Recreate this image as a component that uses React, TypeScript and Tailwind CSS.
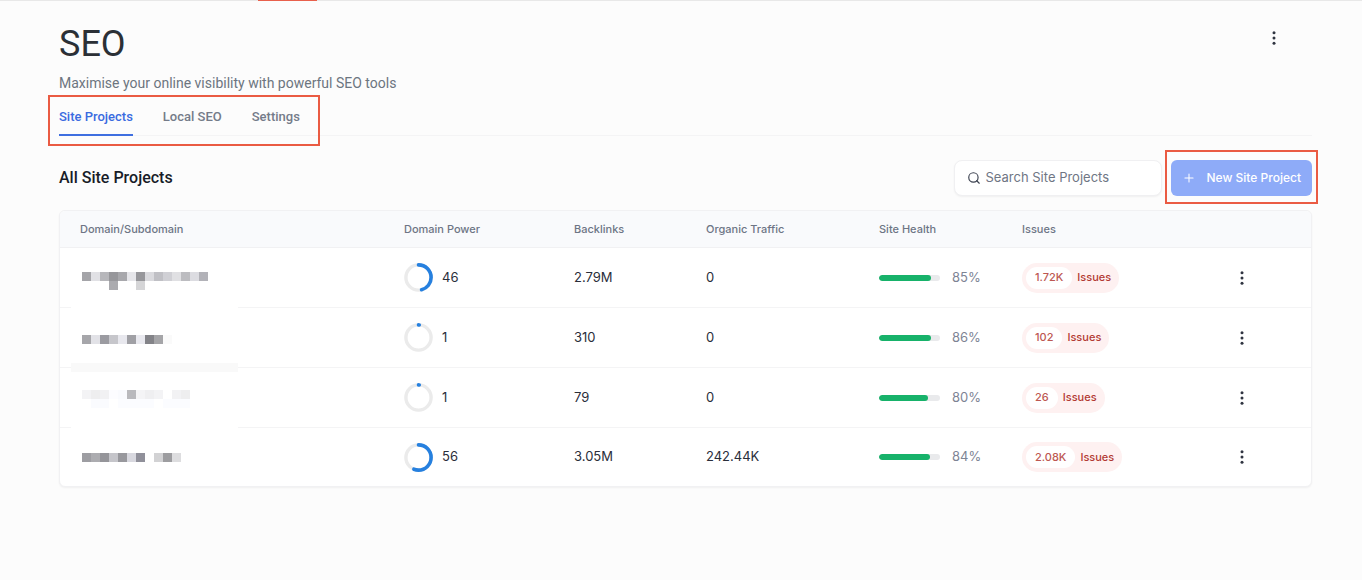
import { useState } from 'react';
import { Plus, Search } from 'lucide-react';

interface Block {
  x: number;
  y: number;
  color: string;
}

interface Project {
  id: string;
  power: number;
  backlinks: string;
  traffic: string;
  health: number;
  issues: string;
  seam?: 'top' | 'bottom';
  blocks: Block[];
}

const TABS = ['Site Projects', 'Local SEO', 'Settings'];

const COLUMNS = ['Domain/Subdomain', 'Domain Power', 'Backlinks', 'Organic Traffic', 'Site Health', 'Issues'];

const BLOCK = 9;

function blockRow(y: number, colors: string[]): Block[] {
  return colors
    .map((color, i) => ({ x: 11 + i * BLOCK, y, color }))
    .filter((block) => block.color !== '');
}

const PROJECTS: Project[] = [
  {
    id: 'p1',
    power: 46,
    backlinks: '2.79M',
    traffic: '0',
    health: 85,
    issues: '1.72K',
    blocks: [
      ...blockRow(24, ['#a4a4a8', '#e1e1e5', '#b7b7bb', '#97979b', '#a8a8ac', '#e6e6ea', '#97979b', '#dadade', '#c0c0c5', '#d0d0d5', '#e0e0e3', '#bcbcc0', '#dcdce1', '#b2b2b8']),
      ...blockRow(33, ['', '', '', '#ababaf', '', '', '#d5d5d7']),
    ],
  },
  {
    id: 'p2',
    power: 1,
    backlinks: '310',
    traffic: '0',
    health: 86,
    issues: '102',
    seam: 'bottom',
    blocks: blockRow(27, ['#a6a6aa', '#e2e2e7', '#9b9ba1', '#c6c6cb', '#e8e8ee', '#a0a0a5', '#e9e9ef', '#838388', '#a5a5a8', '#fafafa']),
  },
  {
    id: 'p3',
    power: 1,
    backlinks: '79',
    traffic: '0',
    health: 80,
    issues: '26',
    seam: 'top',
    blocks: [
      ...blockRow(22, ['#f3f3f5', '#eeeeef', '#f1f1f3', '#fcfcff', '#f9fafe', '#b9b9bd', '#f4f4f6', '#efeff1', '#f3f3f5', '', '#f2f2f4', '#eeeeef']),
      ...blockRow(31, ['', '#fafbfe', '#fafbfe', '', '#fbfcff', '#fbfcff', '#fbfcff', '#fbfcff', '', '#fbfcff', '#fbfcff', '#fbfcff']),
    ],
  },
  {
    id: 'p4',
    power: 56,
    backlinks: '3.05M',
    traffic: '242.44K',
    health: 84,
    issues: '2.08K',
    blocks: blockRow(25, ['#9d9da2', '#acacb0', '#95959a', '#c5c5ca', '#98989d', '#d8d8df', '#90909a', '', '#d2d2d4', '#9d9da0', '#dddddf']),
  },
];

function Kebab() {
  return (
    <svg width="4" height="14" viewBox="0 0 4 14" fill="currentColor" aria-hidden="true">
      <circle cx="2" cy="1.8" r="1.5" />
      <circle cx="2" cy="7" r="1.5" />
      <circle cx="2" cy="12.2" r="1.5" />
    </svg>
  );
}

function MaskedDomain({ blocks, seam }: { blocks: Block[]; seam?: 'top' | 'bottom' }) {
  return (
    <svg width="167" height="60" className="absolute top-0 left-[11px]" shapeRendering="crispEdges" role="img" aria-label="Hidden domain">
      <rect width="167" height="60" fill="#ffffff" />
      {seam === 'bottom' && <rect y="55" width="167" height="5" fill="#f9f9f9" />}
      {seam === 'top' && <rect width="167" height="4" fill="#f9f9f9" />}
      {blocks.map((block) => (
        <rect key={`${block.x}-${block.y}`} x={block.x} y={block.y} width={BLOCK} height={BLOCK} fill={block.color} />
      ))}
    </svg>
  );
}

function PowerRing({ value }: { value: number }) {
  return (
    <svg width="29" height="29" viewBox="0 0 29 29" fill="none" aria-hidden="true">
      <circle cx="14.5" cy="14.5" r="12.6" stroke="#ebebeb" strokeWidth="3.4" />
      <circle
        cx="14.5"
        cy="14.5"
        r="12.6"
        stroke="#2680df"
        strokeWidth="3.6"
        strokeLinecap="round"
        pathLength="100"
        strokeDasharray={`${value} 100`}
        transform="rotate(-90 14.5 14.5)"
      />
    </svg>
  );
}

function ProjectRow({ project }: { project: Project }) {
  return (
    <tr className="h-[60px] last:h-[58px] [&>td]:border-b [&>td]:border-[#f4f4f5] [&>td]:px-5 last:[&>td]:border-b-0">
      <td className="relative">
        <MaskedDomain blocks={project.blocks} seam={project.seam} />
      </td>
      <td>
        <div className="flex items-center gap-[9px]">
          <PowerRing value={project.power} />
          {project.power}
        </div>
      </td>
      <td>{project.backlinks}</td>
      <td>{project.traffic}</td>
      <td>
        <div className="flex items-center gap-3 text-[#7d8494]">
          <div className="h-[6px] w-[61px] overflow-hidden rounded-full bg-[#e9eaec]">
            <div className="h-full rounded-full bg-[#17b26a]" style={{ width: `${project.health}%` }} />
          </div>
          {project.health}%
        </div>
      </td>
      <td>
        <span className="inline-flex h-[30px] items-center gap-[5px] rounded-full bg-[#fef1f1] pr-2 pl-1 align-middle text-[11px] font-medium text-[#b23a33]">
          <span className="flex h-[22px] items-center rounded-full bg-white px-[9px] text-[#bd5852]">{project.issues}</span>
          Issues
        </span>
      </td>
      <td>
        <button type="button" aria-label="Project actions" className="flex h-6 w-6 items-center justify-center text-[#2f3440]">
          <Kebab />
        </button>
      </td>
    </tr>
  );
}

export default function App() {
  const [activeTab, setActiveTab] = useState('Site Projects');
  const [query, setQuery] = useState('');

  return (
    <div className="min-h-screen bg-[#fcfcfc] font-[Inter,sans-serif] text-[#2a2e3a]">
      {/* Top edge */}
      <div className="h-px bg-[#e8e8e8]">
        <div className="ml-[258px] h-px w-[59px] bg-[#e8604c]" />
      </div>

      <main className="pt-[23px] pr-[50px] pl-[59px]">
        {/* Header */}
        <header className="flex items-start justify-between font-[Roboto,sans-serif]">
          <div>
            <h1 className="text-4xl leading-10 text-[#2b3036]">SEO</h1>
            <p className="mt-[9px] text-sm leading-5 text-[#6c7580]">
              Maximise your online visibility with powerful SEO tools
            </p>
          </div>
          <button type="button" aria-label="More options" className="mt-[2px] mr-[26px] flex h-6 w-6 items-center justify-center text-[#2f3440]">
            <Kebab />
          </button>
        </header>

        {/* Tabs */}
        <div className="mt-3 flex border-b border-[#f4f4f5]">
          <nav className="relative -mb-px flex gap-[30px] font-[Roboto,sans-serif]">
            {TABS.map((tab) => (
              <button
                key={tab}
                type="button"
                onClick={() => setActiveTab(tab)}
                className={`h-[31px] border-b-2 pt-[2px] pb-[7px] text-[13px] leading-5 font-medium ${
                  activeTab === tab ? 'border-[#3f6fe0] text-[#3a6be0]' : 'border-transparent text-[#747b89]'
                }`}
              >
                {tab}
              </button>
            ))}
            <span className="pointer-events-none absolute -top-[10px] -right-5 -bottom-[10px] -left-[11px] border-2 border-[#ea5b43]" />
          </nav>
        </div>

        {/* Toolbar */}
        <div className="mt-6 mb-[14px] flex items-center justify-between">
          <h2 className="font-[Roboto,sans-serif] text-base font-medium text-[#181c28]">All Site Projects</h2>
          <div className="flex items-center gap-[9px]">
            <label className="flex h-9 w-52 items-center gap-1 rounded-lg border border-[#f0f0f2] bg-white px-3 shadow-xs">
              <Search className="h-[14px] w-[14px] shrink-0 text-[#3c4250]" aria-hidden="true" />
              <input
                type="text"
                value={query}
                onChange={(e) => setQuery(e.target.value)}
                placeholder="Search Site Projects"
                aria-label="Search Site Projects"
                className="w-full min-w-0 bg-transparent text-[13px] outline-none placeholder:text-[#6f7684]"
              />
            </label>
            <div className="relative">
              <button type="button" className="flex h-9 items-center gap-[10px] rounded-md bg-[#8eabf8] px-[11px] text-xs font-medium text-white">
                <Plus className="h-[14px] w-[14px]" strokeWidth={1.75} />
                New Site Project
              </button>
              <span className="pointer-events-none absolute -inset-x-[6px] -top-[10px] -bottom-2 border-2 border-[#ea5b43]" />
            </div>
          </div>
        </div>

        {/* Projects */}
        <div className="overflow-hidden rounded-md border border-[#f1f1f3] bg-white shadow-xs">
          <table className="w-full table-fixed border-separate border-spacing-0 text-left text-[13px]">
            <colgroup>
              <col />
              <col className="w-[170px]" />
              <col className="w-[132px]" />
              <col className="w-[173px]" />
              <col className="w-[143px]" />
              <col className="w-[208px]" />
              <col className="w-[101px]" />
            </colgroup>
            <thead>
              <tr className="h-[37px] bg-[#f9fafc] text-[11px] text-[#6d7585]">
                {COLUMNS.map((column) => (
                  <th key={column} scope="col" className="border-b border-[#f1f1f3] px-5 font-medium">
                    {column}
                  </th>
                ))}
                <td className="border-b border-[#f1f1f3]" />
              </tr>
            </thead>
            <tbody>
              {PROJECTS.map((project) => (
                <ProjectRow key={project.id} project={project} />
              ))}
            </tbody>
          </table>
        </div>
      </main>
    </div>
  );
}
